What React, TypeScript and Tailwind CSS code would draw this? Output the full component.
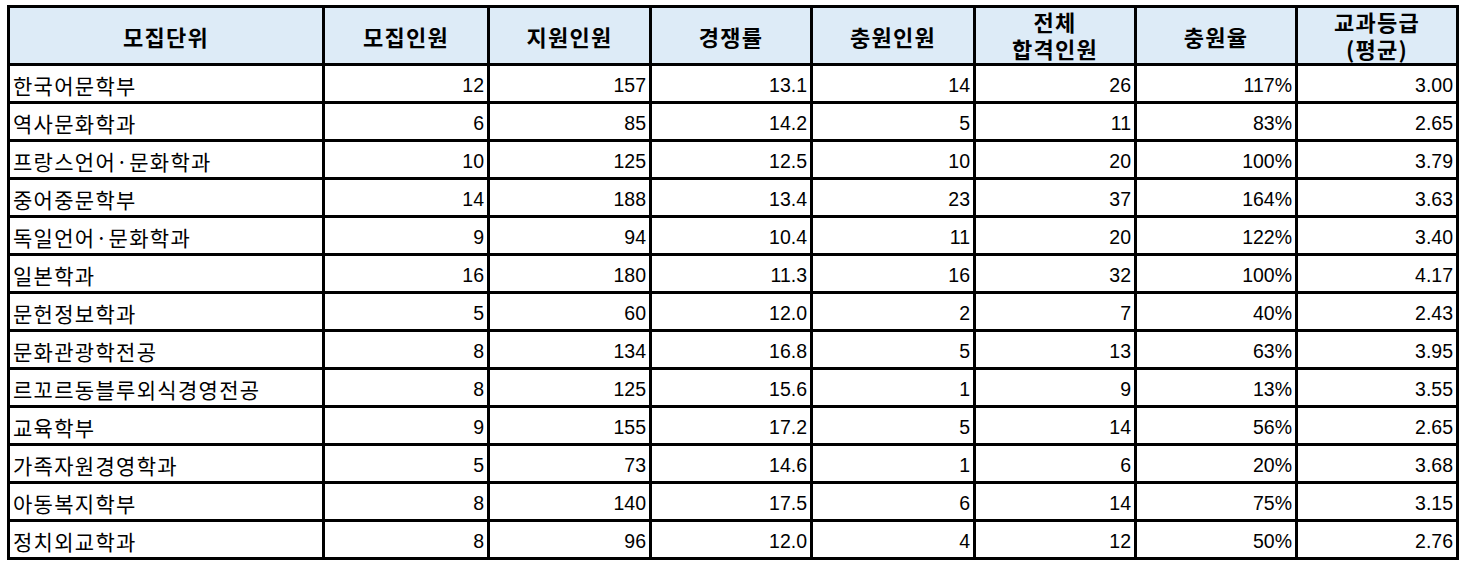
import React from "react";

const rows: [string, string, string, string, string, string, string, string][] = [
  ["한국어문학부", "12", "157", "13.1", "14", "26", "117%", "3.00"],
  ["역사문화학과", "6", "85", "14.2", "5", "11", "83%", "2.65"],
  ["프랑스언어·문화학과", "10", "125", "12.5", "10", "20", "100%", "3.79"],
  ["중어중문학부", "14", "188", "13.4", "23", "37", "164%", "3.63"],
  ["독일언어·문화학과", "9", "94", "10.4", "11", "20", "122%", "3.40"],
  ["일본학과", "16", "180", "11.3", "16", "32", "100%", "4.17"],
  ["문헌정보학과", "5", "60", "12.0", "2", "7", "40%", "2.43"],
  ["문화관광학전공", "8", "134", "16.8", "5", "13", "63%", "3.95"],
  ["르꼬르동블루외식경영전공", "8", "125", "15.6", "1", "9", "13%", "3.55"],
  ["교육학부", "9", "155", "17.2", "5", "14", "56%", "2.65"],
  ["가족자원경영학과", "5", "73", "14.6", "1", "6", "20%", "3.68"],
  ["아동복지학부", "8", "140", "17.5", "6", "14", "75%", "3.15"],
  ["정치외교학과", "8", "96", "12.0", "4", "12", "50%", "2.76"],
];

const KR = "font-['Noto_Sans_CJK_KR',sans-serif]";
const NUM = "font-['Liberation_Sans','Noto_Sans_CJK_KR',sans-serif]";

function Head({ children, two }: { children: React.ReactNode; two?: boolean }) {
  return (
    <div
      className={`bg-[#ddebf7] flex items-center justify-center text-center text-[22px] tracking-[1.2px] font-bold text-black ${
        two ? "leading-[27px] pb-[2px]" : "leading-[30px]"
      } ${KR}`}
    >
      <div>{children}</div>
    </div>
  );
}

export default function App() {
  return (
    <div className="bg-white w-[1471px] h-[563px] pt-[5px] pl-[7px]">
      <div className="inline-grid bg-black p-[3px] gap-[3px] grid-cols-[312px_162px_159px_158px_160px_158px_158px_158px] grid-rows-[55px_repeat(13,35px)]">
        <Head>모집단위</Head>
        <Head>모집인원</Head>
        <Head>지원인원</Head>
        <Head>경쟁률</Head>
        <Head>충원인원</Head>
        <Head two>
          전체
          <br />
          합격인원
        </Head>
        <Head>충원율</Head>
        <Head two>
          교과등급
          <br />
          (평균)
        </Head>
        {rows.map((r) => (
          <React.Fragment key={r[0]}>
            <div
              className={`bg-white flex items-center pl-[3px] pt-[5px] text-[21px] tracking-[1.3px] text-black whitespace-nowrap ${KR}`}
            >
              {r[0]}
            </div>
            {r.slice(1).map((v, i) => (
              <div
                key={i}
                className={`bg-white flex items-center justify-end pr-[3px] pt-[5px] text-[19.5px] text-black ${NUM}`}
              >
                {v}
              </div>
            ))}
          </React.Fragment>
        ))}
      </div>
    </div>
  );
}
